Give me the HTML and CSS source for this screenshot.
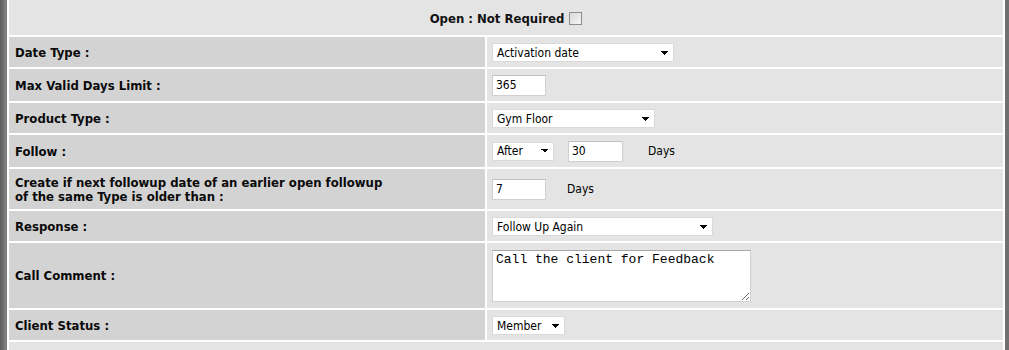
FILE: index.html
```html
<!DOCTYPE html>
<html lang="en">
  <head>
    <meta charset="UTF-8" />
    <title>Followup Settings</title>
    <link rel="stylesheet" href="styles.css">
  </head>
  <body>
    <table class="form">
      <colgroup>
        <col class="col-label" />
        <col class="col-value" />
      </colgroup>
      <tr class="row-head">
        <td colspan="2" class="head">
          Open : Not Required <input type="checkbox" class="check" />
        </td>
      </tr>
      <tr class="row-sel">
        <th>Date Type :</th>
        <td>
          <select class="sel w-date">
            <option>Activation date</option>
          </select>
        </td>
      </tr>
      <tr class="row-input">
        <th>Max Valid Days Limit :</th>
        <td><input type="text" class="txt" value="365" /></td>
      </tr>
      <tr class="row-sel">
        <th>Product Type :</th>
        <td>
          <select class="sel w-product">
            <option>Gym Floor</option>
          </select>
        </td>
      </tr>
      <tr class="row-input">
        <th>Follow :</th>
        <td>
          <select class="sel w-after">
            <option>After</option>
          </select><input type="text" class="txt txt-gap" value="30" /><span class="unit unit-far">Days</span>
        </td>
      </tr>
      <tr class="row-tall">
        <th>Create if next followup date of an earlier open followup<br />of the same Type is older than :</th>
        <td><input type="text" class="txt" value="7" /><span class="unit">Days</span></td>
      </tr>
      <tr class="row-sel">
        <th>Response :</th>
        <td>
          <select class="sel w-response">
            <option>Follow Up Again</option>
          </select>
        </td>
      </tr>
      <tr class="row-comment">
        <th>Call Comment :</th>
        <td><textarea class="comment">Call the client for Feedback</textarea></td>
      </tr>
      <tr class="row-sel">
        <th>Client Status :</th>
        <td>
          <select class="sel w-status">
            <option>Member</option>
          </select>
        </td>
      </tr>
      <tr class="row-foot">
        <td colspan="2" class="head"></td>
      </tr>
    </table>
  </body>
</html>
```

FILE: styles.css
```css
body {
  margin: 0;
  overflow: hidden;
  background: linear-gradient(to right, #5c5c5c, #7a7a7a 5px, #8c8c8c 6px, #707070 7px);
  font-family: "DejaVu Sans Condensed", "DejaVu Sans", sans-serif;
  font-stretch: condensed;
  color: #111;
}

.form {
  width: 998px;
  margin: -2px 0 0 7px;
  table-layout: fixed;
  border-collapse: separate;
  border-spacing: 2px;
  background: #fff;
}

.col-label {
  width: 476px;
}

.form th,
.form td {
  padding: 0 5px;
  vertical-align: middle;
  text-align: left;
  background: #e4e4e4;
}

.form th {
  padding-left: 6px;
  padding-top: 1px;
  background: #d3d3d3;
  font-size: 13px;
  font-weight: bold;
  line-height: 14px;
  color: #0a0a0a;
}

.form td.head {
  text-align: center;
  font-size: 13px;
  font-weight: bold;
  padding-top: 1px;
}

.row-head { height: 35px; }
.row-sel { height: 30px; }
.row-input { height: 32px; }
.row-tall { height: 40px; }
.row-comment { height: 65px; }
.row-foot { height: 12px; }

.check {
  appearance: none;
  width: 13px;
  height: 13px;
  margin: 0 0 0 1px;
  vertical-align: -2px;
  border: 1px solid #8e8e8e;
  background: linear-gradient(135deg, #d8d8d8, #f6f6f6);
}

.sel,
.txt,
.unit {
  font-family: "DejaVu Sans Condensed", "DejaVu Sans", sans-serif;
  font-stretch: condensed;
  font-size: 12px;
  color: #000;
}

.sel {
  appearance: none;
  box-sizing: border-box;
  height: 19px;
  margin: 0;
  padding: 0 0 0 4px;
  vertical-align: middle;
  border: 1px solid #dadada;
  border-radius: 0;
  background-color: #fff;
  background-image:
    linear-gradient(45deg, transparent 50%, #000 50%),
    linear-gradient(135deg, #000 50%, transparent 50%);
  background-size: 4px 4px, 4px 4px;
  background-position: right 8px center, right 4px center;
  background-repeat: no-repeat;
}

.w-date { width: 182px; }
.w-product { width: 163px; }
.w-after { width: 62px; }
.w-response { width: 221px; }
.w-status { width: 73px; }

.txt {
  box-sizing: border-box;
  width: 54px;
  height: 21px;
  margin: 0;
  padding: 0 3px;
  vertical-align: middle;
  border: 1px solid #d0d0d0;
  border-top-color: #c0c0c0;
  background: #fff;
}

.txt-gap {
  width: 55px;
  margin-left: 14px;
}

.unit {
  margin-left: 21px;
  vertical-align: middle;
}

.unit-far {
  margin-left: 25px;
}

.comment {
  box-sizing: border-box;
  display: block;
  width: 259px;
  height: 52px;
  margin: 0;
  padding: 1px 3px;
  border: 1px solid #d0d0d0;
  border-top-color: #a8a8a8;
  background: #fff;
  font-family: "Liberation Mono", monospace;
  font-size: 13px;
  color: #000;
}
```
